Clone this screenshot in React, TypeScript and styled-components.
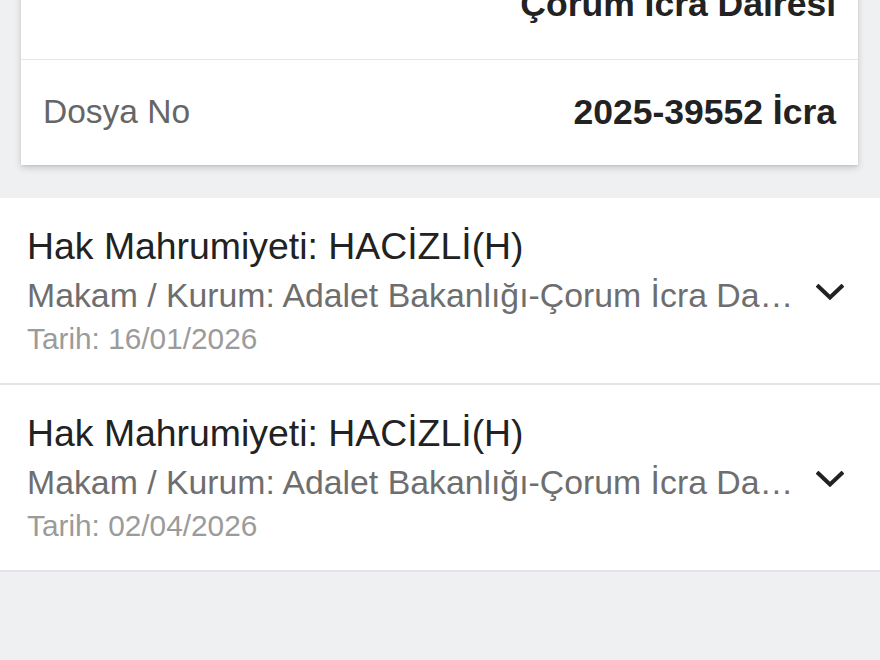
import React from "react";
import styled, { createGlobalStyle } from "styled-components";

const Global = createGlobalStyle`
  html, body {
    margin: 0;
    padding: 0;
    background: #eff0f2;
    font-family: "Liberation Sans", Arial, sans-serif;
  }
  * { box-sizing: border-box; }
`;

const Page = styled.div`
  width: 880px;
  height: 660px;
  overflow: hidden;
  background: #eff0f2;
  display: flex;
  flex-direction: column;
`;

const CardWrap = styled.div`
  padding: 0 22px 0 21px;
  margin-top: -92px;
`;

const Card = styled.div`
  background: #ffffff;
  box-shadow: 0 3px 7px rgba(0, 0, 0, 0.16), 0 1px 2px rgba(0, 0, 0, 0.08);
`;

const InfoRow = styled.div<{ $top?: boolean; $last?: boolean }>`
  display: flex;
  justify-content: space-between;
  align-items: ${(p) => (p.$top ? "flex-start" : "center")};
  padding: ${(p) => (p.$top ? "30px 22px 33px" : "30px 22px 31px")};
  border-bottom: ${(p) => (p.$last ? "none" : "1.5px solid #e4e5e7")};
`;

const InfoLabel = styled.div`
  font-size: 33.5px;
  line-height: 44px;
  color: #666666;
`;

const InfoValue = styled.div`
  font-size: 35.5px;
  line-height: 44px;
  font-weight: 700;
  color: #222222;
  text-align: right;
`;

const List = styled.div`
  margin-top: 33px;
  background: #ffffff;
`;

const Item = styled.div`
  display: flex;
  align-items: center;
  gap: 17px;
  padding: 25.5px 36px 23.5px 27px;
  border-bottom: 2px solid #e2e4e7;
`;

const TextCol = styled.div`
  flex: 1;
  min-width: 0;
  display: flex;
  flex-direction: column;
`;

const Title = styled.div`
  font-size: 37.4px;
  line-height: 44px;
  color: #222222;
  white-space: nowrap;
`;

const Sub = styled.div`
  margin-top: 4px;
  font-size: 33.8px;
  line-height: 46px;
  color: #6e6e6e;
  white-space: nowrap;
  overflow: hidden;
  text-overflow: ellipsis;
`;

const DateLine = styled.div`
  font-size: 29.8px;
  line-height: 42px;
  color: #9b9b9b;
  white-space: nowrap;
`;

const Chevron = styled.svg`
  flex: none;
  width: 28px;
  height: 16px;
  display: block;
`;

const items = [
  { date: "16/01/2026" },
  { date: "02/04/2026" },
];

export default function App() {
  return (
    <Page>
      <Global />
      <CardWrap>
        <Card>
          <InfoRow $top>
            <InfoLabel>Birim</InfoLabel>
            <InfoValue>
              Adalet Bakanlığı-
              <br />
              Çorum İcra Dairesi
            </InfoValue>
          </InfoRow>
          <InfoRow $last>
            <InfoLabel>Dosya No</InfoLabel>
            <InfoValue>2025-39552 İcra</InfoValue>
          </InfoRow>
        </Card>
      </CardWrap>
      <List>
        {items.map((it, i) => (
          <Item key={i}>
            <TextCol>
              <Title>Hak Mahrumiyeti: HACİZLİ(H)</Title>
              <Sub>Makam / Kurum: Adalet Bakanlığı-Çorum İcra Dairesi</Sub>
              <DateLine>Tarih: {it.date}</DateLine>
            </TextCol>
            <Chevron viewBox="0 0 28 16" fill="none">
              <polyline
                points="2.5,2.5 14,13.5 25.5,2.5"
                stroke="#222222"
                strokeWidth="4"
                strokeLinecap="square"
                strokeLinejoin="miter"
              />
            </Chevron>
          </Item>
        ))}
      </List>
    </Page>
  );
}
